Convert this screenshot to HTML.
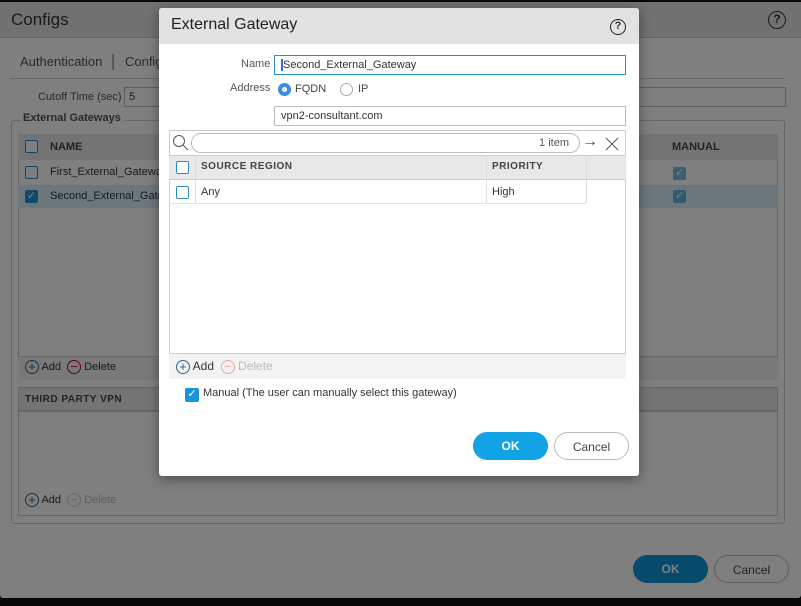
<!DOCTYPE html><html><head><style>
*{box-sizing:border-box;margin:0;padding:0}
body{width:801px;height:606px;overflow:hidden;background:#111;font-family:"Liberation Sans",sans-serif;position:relative;font-size:11px;color:#333}
.a{position:absolute}
.pg{left:0;top:2px;width:801px;height:596px;background:#fff;border-radius:3px}
.hd{left:0;top:0;width:801px;height:36px;background:#e2e2e2;border-bottom:1px solid #ccc}
.cb{width:13px;height:13px;border:1.5px solid #2a89c0;border-radius:2px;background:#fff}
.cbc{background:#1a94d8;border-color:#1a94d8;color:#fff;font-size:11px;line-height:11px;text-align:center}
.ov{left:0;top:0;width:801px;height:606px;background:rgba(0,0,0,.5)}
.th{background:#e8e8e8;font-weight:bold;font-size:10px;letter-spacing:.5px;color:#444}
.btn{border-radius:15px;height:28px;text-align:center;line-height:28px;font-size:12px}
.circ{display:inline-block;width:14px;height:14px;border:1px solid #2c6690;border-radius:50%;text-align:center;line-height:11px;font-size:13px;color:#2c6690;vertical-align:middle}
</style></head><body>
<div class="a pg">
 <div class="a hd"></div>
 <div class="a" style="left:11px;top:8px;font-size:17px;color:#333">Configs</div>
 <div class="a" style="left:768px;top:9px;width:18px;height:18px;border:1.5px solid #333;border-radius:50%;text-align:center;font-size:12px;line-height:15px;font-weight:bold">?</div>
 <div class="a" style="left:20px;top:52px;font-size:13px;color:#555">Authentication &nbsp;│&nbsp; Config</div>
 <div class="a" style="left:10px;top:76px;width:775px;border-top:1px solid #ccc"></div>
 <div class="a" style="left:38px;top:89px;color:#555">Cutoff Time (sec)</div>
 <div class="a" style="left:124px;top:85px;width:662px;height:20px;border:1px solid #bbb;padding:3px 4px">5</div>
 <div class="a" style="left:11px;top:118px;width:774px;height:404px;border:1px solid #ccc;border-radius:3px"></div>
 <div class="a" style="left:20px;top:110px;background:#fff;padding:0 3px;font-weight:bold;color:#555">External Gateways</div>
 <div class="a" style="left:18px;top:132px;width:760px;height:245px;border:1px solid #ccc"></div>
 <div class="a th" style="left:18px;top:132px;width:760px;height:26px"></div>
 <div class="a cb" style="left:25px;top:138px"></div>
 <div class="a" style="left:50px;top:139px;font-weight:bold;color:#444">NAME</div>
 <div class="a" style="left:672px;top:139px;font-weight:bold;color:#444">MANUAL</div>
 <div class="a cb" style="left:25px;top:164px"></div>
 <div class="a" style="left:50px;top:164px">First_External_Gateway</div>
 <div class="a" style="left:18px;top:183px;width:760px;height:23px;background:#d8eef9"></div>
 <div class="a cb cbc" style="left:25px;top:188px">✓</div>
 <div class="a" style="left:50px;top:188px">Second_External_Gateway</div>
 <div class="a cb cbc" style="left:673px;top:165px;opacity:.6">✓</div>
 <div class="a cb cbc" style="left:673px;top:188px;opacity:.6">✓</div>
 <div class="a" style="left:18px;top:354px;width:760px;height:24px;border-top:1px solid #ccc;background:#f3f3f3"></div>
 <div class="a" style="left:25px;top:358px;color:#333"><span class="circ">+</span> Add &nbsp;<span class="circ" style="border-color:#c03;color:#c03">−</span> Delete</div>
 <div class="a th" style="left:18px;top:385px;width:760px;height:24px;border:1px solid #ccc;padding:6px"> THIRD PARTY VPN</div>
 <div class="a" style="left:18px;top:409px;width:760px;height:105px;border:1px solid #ccc"></div>
 <div class="a" style="left:25px;top:491px;color:#333"><span class="circ">+</span> Add &nbsp;<span class="circ" style="border-color:#ccc;color:#ccc">−</span> <span style="color:#bbb">Delete</span></div>
 <div class="a btn" style="left:633px;top:553px;width:75px;background:#0d96d8;color:#fff;font-weight:bold">OK</div>
 <div class="a btn" style="left:714px;top:553px;width:75px;border:1px solid #bbb;color:#444">Cancel</div>
</div>
<div class="a ov"></div>
<div class="a" style="left:159px;top:8px;width:480px;height:468px;background:#fff;border-radius:3px;box-shadow:0 3px 12px rgba(0,0,0,.4);overflow:hidden">
 <div class="a" style="left:0;top:0;width:480px;height:36px;background:#e2e2e2"></div>
 <div class="a" style="left:12px;top:8px;font-size:16px;color:#222">External Gateway</div>
 <div class="a" style="left:451px;top:11px;width:16px;height:16px;border:1.5px solid #222;border-radius:50%;text-align:center;font-size:11px;line-height:13px;font-weight:bold">?</div>
 <div class="a" style="left:82px;top:50px;color:#555">Name</div>
 <div class="a" style="left:115px;top:47px;width:352px;height:20px;border:1px solid #2b8fc6;padding:3px 6px;color:#333"><span style="border-left:2px solid #2b6fd8"></span>Second_External_Gateway</div>
 <div class="a" style="left:71px;top:74px;color:#555">Address</div>
 <div class="a" style="left:119px;top:75px;width:13px;height:13px;border-radius:50%;background:#3b8de6;box-shadow:inset 0 0 0 4px #3b8de6,inset 0 0 0 6px #fff"></div>
 <div class="a" style="left:136px;top:75px;color:#444">FQDN</div>
 <div class="a" style="left:181px;top:75px;width:13px;height:13px;border-radius:50%;border:1px solid #aaa"></div>
 <div class="a" style="left:199px;top:75px;color:#444">IP</div>
 <div class="a" style="left:115px;top:98px;width:352px;height:20px;border:1px solid #bbb;padding:3px 6px;color:#333">vpn2-consultant.com</div>
 <div class="a" style="left:10px;top:122px;width:457px;height:249px;border:1px solid #ccc"></div>
 <svg class="a" style="left:13px;top:126px" width="18" height="18"><circle cx="7" cy="7" r="5.5" fill="none" stroke="#555"/><line x1="11" y1="11" x2="16" y2="16" stroke="#555"/></svg>
 <div class="a" style="left:32px;top:125px;width:389px;height:20px;border:1px solid #bbb;border-radius:10px;text-align:right;padding:3px 10px;color:#555">1 item</div>
 <div class="a" style="left:423px;top:125px;font-size:16px;color:#444">→</div>
 <svg class="a" style="left:446px;top:129px" width="14" height="14"><path d="M1 1L13 13M13 1L1 13" stroke="#555"/></svg>
 <div class="a th" style="left:10px;top:147px;width:457px;height:25px;border-top:1px solid #ccc;border-bottom:1px solid #ccc"></div>
 <div class="a cb" style="left:17px;top:153px"></div>
 <div class="a" style="left:36px;top:147px;height:48px;border-left:1px solid #ddd"></div>
 <div class="a" style="left:42px;top:153px;font-weight:bold;font-size:10px;letter-spacing:.5px;color:#444">SOURCE REGION</div>
 <div class="a" style="left:327px;top:147px;height:48px;border-left:1px solid #ddd"></div>
 <div class="a" style="left:427px;top:147px;height:48px;border-left:1px solid #ddd"></div>
 <div class="a" style="left:333px;top:153px;font-weight:bold;font-size:10px;letter-spacing:.5px;color:#444">PRIORITY</div>
 <div class="a cb" style="left:17px;top:178px"></div>
 <div class="a" style="left:42px;top:178px">Any</div>
 <div class="a" style="left:333px;top:178px">High</div>
 <div class="a" style="left:10px;top:195px;width:417px;border-top:1px solid #e4e4e4"></div>
 <div class="a" style="left:10px;top:345px;width:457px;height:26px;background:#f3f3f3;border-top:1px solid #ccc"></div>
 <div class="a" style="left:17px;top:351px;color:#333;font-size:12px"><span class="circ">+</span> Add &nbsp;<span class="circ" style="border-color:#e8a8a8;color:#e8a8a8">−</span> <span style="color:#bbb">Delete</span></div>
 <div class="a cb cbc" style="left:26px;top:380px;width:14px;height:14px">✓</div>
 <div class="a" style="left:44px;top:379px;color:#333">Manual (The user can manually select this gateway)</div>
 <div class="a btn" style="left:314px;top:424px;width:75px;background:#12a2e6;color:#fff;font-weight:bold">OK</div>
 <div class="a btn" style="left:395px;top:424px;width:75px;border:1px solid #bbb;color:#444">Cancel</div>
</div>
</body></html>
